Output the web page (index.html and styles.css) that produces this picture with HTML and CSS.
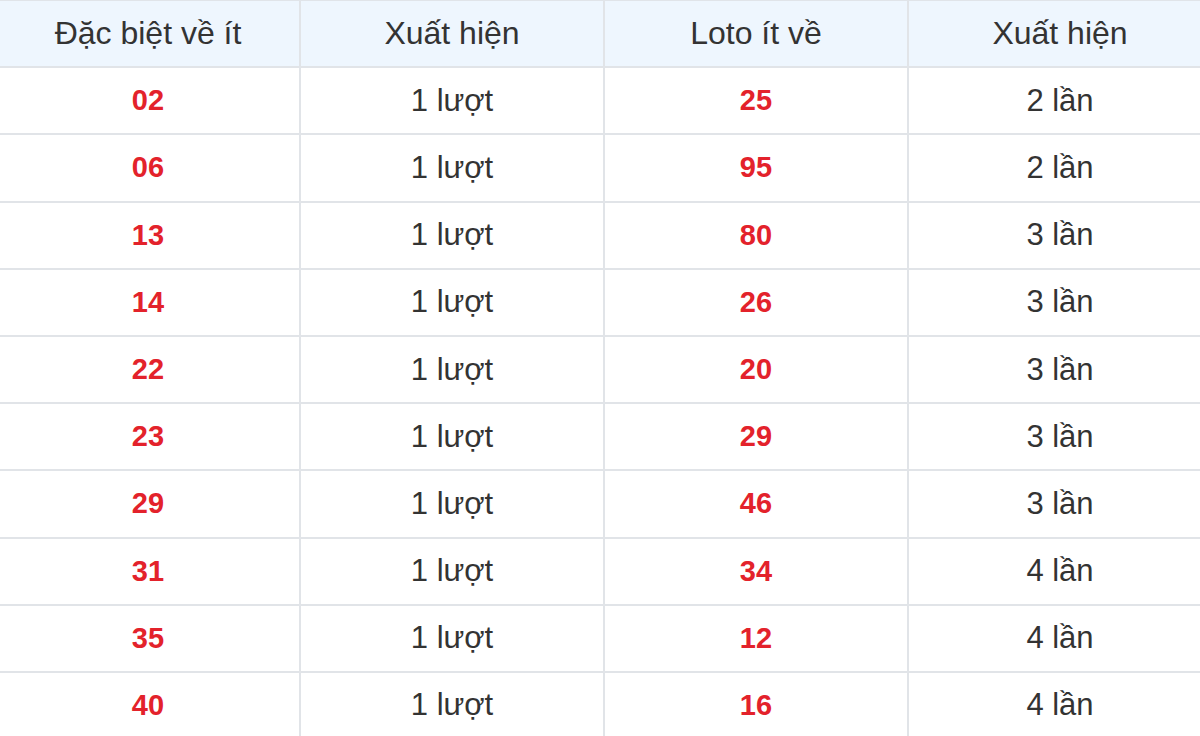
FILE: index.html
```html
<!DOCTYPE html>
<html lang="vi">
<head>
<meta charset="utf-8">
<title>Thống kê</title>
<link rel="stylesheet" href="styles.css">
</head>
<body>
<div class="table">
  <div class="cell head">Đặc biệt về ít</div>
  <div class="cell head">Xuất hiện</div>
  <div class="cell head">Loto ít về</div>
  <div class="cell head">Xuất hiện</div>

  <div class="cell num">02</div><div class="cell">1 lượt</div><div class="cell num">25</div><div class="cell">2 lần</div>
  <div class="cell num">06</div><div class="cell">1 lượt</div><div class="cell num">95</div><div class="cell">2 lần</div>
  <div class="cell num">13</div><div class="cell">1 lượt</div><div class="cell num">80</div><div class="cell">3 lần</div>
  <div class="cell num">14</div><div class="cell">1 lượt</div><div class="cell num">26</div><div class="cell">3 lần</div>
  <div class="cell num">22</div><div class="cell">1 lượt</div><div class="cell num">20</div><div class="cell">3 lần</div>
  <div class="cell num">23</div><div class="cell">1 lượt</div><div class="cell num">29</div><div class="cell">3 lần</div>
  <div class="cell num">29</div><div class="cell">1 lượt</div><div class="cell num">46</div><div class="cell">3 lần</div>
  <div class="cell num">31</div><div class="cell">1 lượt</div><div class="cell num">34</div><div class="cell">4 lần</div>
  <div class="cell num">35</div><div class="cell">1 lượt</div><div class="cell num">12</div><div class="cell">4 lần</div>
  <div class="cell num">40</div><div class="cell">1 lượt</div><div class="cell num">16</div><div class="cell">4 lần</div>
</div>
</body>
</html>
```
FILE: styles.css
```css
html, body {
  margin: 0;
  padding: 0;
  background: #ffffff;
  overflow: hidden;
}
body {
  font-family: "Liberation Sans", Arial, sans-serif;
}
.table {
  display: grid;
  grid-template-columns: repeat(4, 304px);
  grid-auto-rows: 67.2px;
  margin-left: -3px;
  border-top: 1px solid #e0e4e9;
  width: 1216px;
}
.cell {
  display: flex;
  align-items: center;
  justify-content: center;
  border-right: 2px solid #e1e4e8;
  border-bottom: 2px solid #e1e4e8;
  font-size: 31px;
  color: #333333;
  background: #ffffff;
}
.head {
  background: #eef6fe;
  color: #333333;
  font-size: 32px;
}
.num {
  color: #e3222b;
  font-weight: bold;
  font-size: 29px;
}
```
